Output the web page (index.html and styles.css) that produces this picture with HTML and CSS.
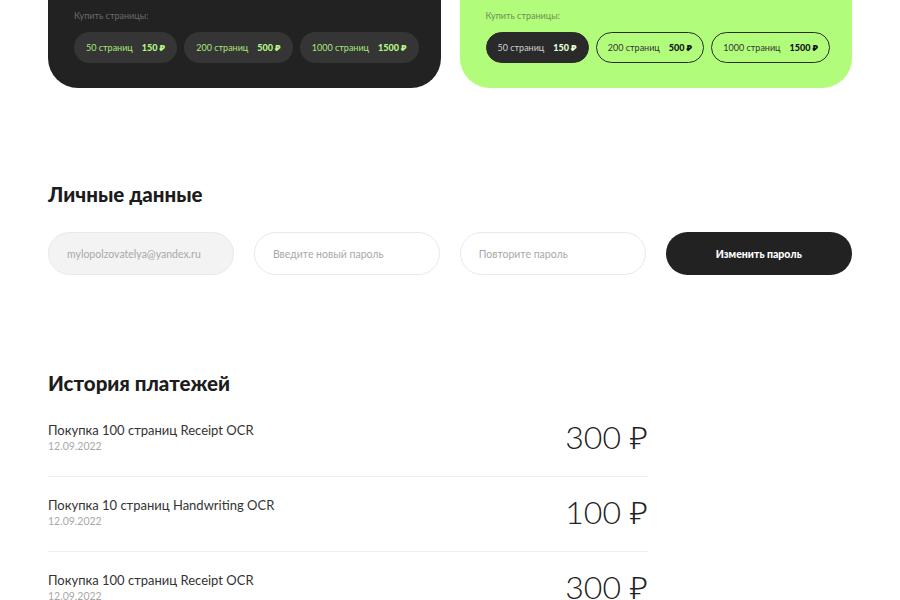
FILE: index.html
```html
<!DOCTYPE html>
<html lang="ru">
<head>
  <meta charset="UTF-8">
  <title>Личный кабинет</title>
  <link rel="stylesheet" href="styles.css">
</head>
<body>
  <div class="page">
    <section class="plans">
      <div class="plan plan-dark">
        <p class="plan-label">Купить страницы:</p>
        <div class="pills">
          <button class="pill">50 страниц <b>150 ₽</b></button>
          <button class="pill">200 страниц <b>500 ₽</b></button>
          <button class="pill">1000 страниц <b>1500 ₽</b></button>
        </div>
      </div>
      <div class="plan plan-green">
        <p class="plan-label">Купить страницы:</p>
        <div class="pills">
          <button class="pill active">50 страниц <b>150 ₽</b></button>
          <button class="pill">200 страниц <b>500 ₽</b></button>
          <button class="pill">1000 страниц <b>1500 ₽</b></button>
        </div>
      </div>
    </section>

    <section class="personal">
      <h2 class="section-title">Личные данные</h2>
      <form class="pass-form">
        <input type="email" class="field field-email" value="mylopolzovatelya@yandex.ru" readonly>
        <input type="password" class="field" placeholder="Введите новый пароль">
        <input type="password" class="field" placeholder="Повторите пароль">
        <button type="button" class="btn-dark">Изменить пароль</button>
      </form>
    </section>

    <section class="history">
      <h2 class="section-title">История платежей</h2>
      <ul class="payments">
        <li class="payment">
          <div>
            <div class="payment-name">Покупка 100 страниц Receipt OCR</div>
            <div class="payment-date">12.09.2022</div>
          </div>
          <div class="payment-sum">300 ₽</div>
        </li>
        <li class="payment">
          <div>
            <div class="payment-name">Покупка 10 страниц Handwriting OCR</div>
            <div class="payment-date">12.09.2022</div>
          </div>
          <div class="payment-sum">100 ₽</div>
        </li>
        <li class="payment">
          <div>
            <div class="payment-name">Покупка 100 страниц Receipt OCR</div>
            <div class="payment-date">12.09.2022</div>
          </div>
          <div class="payment-sum">300 ₽</div>
        </li>
      </ul>
    </section>
  </div>
</body>
</html>
```

FILE: styles.css
```css
body {
  margin: 0;
  font-family: Lato, "Noto Sans", sans-serif;
  color: #222;
  background: #fff;
}
.page {
  width: 804px;
  margin: 0 auto;
}

.plans {
  display: grid;
  grid-template-columns: minmax(0, 1fr) minmax(0, 1fr);
  gap: 19px;
}
.plan {
  border-radius: 0 0 30px 30px;
  padding: 10px 26px 25px;
}
.plan-dark { background: #222; }
.plan-green { background: #b2fc7b; }
.plan-label {
  margin: 0 0 10px;
  font-size: 9px;
  line-height: 12px;
  color: #6b6b6b;
}
.plan-green .plan-label { color: #6f8f55; }
.pills {
  display: flex;
  gap: 7px;
}
.pill {
  height: 31px;
  padding: 0 11px;
  border-radius: 16px;
  border: 1px solid transparent;
  font-family: inherit;
  font-size: 9px;
  display: flex;
  align-items: center;
  gap: 9px;
  white-space: nowrap;
  cursor: pointer;
}
.pill b { font-weight: 900; }
.plan-dark .pill {
  background: #353535;
  color: #a9e67c;
}
.plan-dark .pill b { color: #b6f585; }
.plan-green .pill {
  background: transparent;
  border-color: #2b2b2b;
  color: #333;
}
.plan-green .pill b { color: #111; }
.plan-green .pill.active {
  background: #2a2a2a;
  color: #cfcfcf;
}
.plan-green .pill.active b { color: #e8ffd6; }

.section-title {
  margin: 0;
  font-size: 20.5px;
  font-weight: 900;
  color: #1c1c1c;
  line-height: 24px;
}

/* personal data */
.personal { margin-top: 94px; }
.pass-form {
  margin-top: 26px;
  display: grid;
  grid-template-columns: repeat(4, 1fr);
  gap: 19.5px;
}
.field {
  height: 43px;
  box-sizing: border-box;
  border: 1px solid #e9e9e9;
  border-radius: 22px;
  padding: 0 18px;
  font-family: inherit;
  font-size: 10.5px;
  color: #a9a9a9;
  background: #fff;
  outline: none;
}
.field::placeholder { color: #a8a8a8; }
.field-email { background: #f3f3f3; }
.btn-dark {
  height: 43px;
  border: none;
  border-radius: 22px;
  background: #222;
  color: #fff;
  font-family: inherit;
  font-size: 10.5px;
  font-weight: 900;
  cursor: pointer;
}

/* payments */
.history { margin-top: 96px; }
.payments {
  list-style: none;
  margin: 7px 0 0;
  padding: 0;
  width: 600px;
}
.payment {
  display: flex;
  justify-content: space-between;
  align-items: center;
  height: 75px;
  border-bottom: 1px solid #eee;
  box-sizing: border-box;
  padding-bottom: 5px;
}
.payment-name { font-size: 13px; color: #333; line-height: 18px; }
.payment-date { font-size: 10.5px; color: #a8a8a8; line-height: 14px; }
.payment-sum {
  font-size: 32px;
  font-weight: 300;
  color: #222;
}
```
